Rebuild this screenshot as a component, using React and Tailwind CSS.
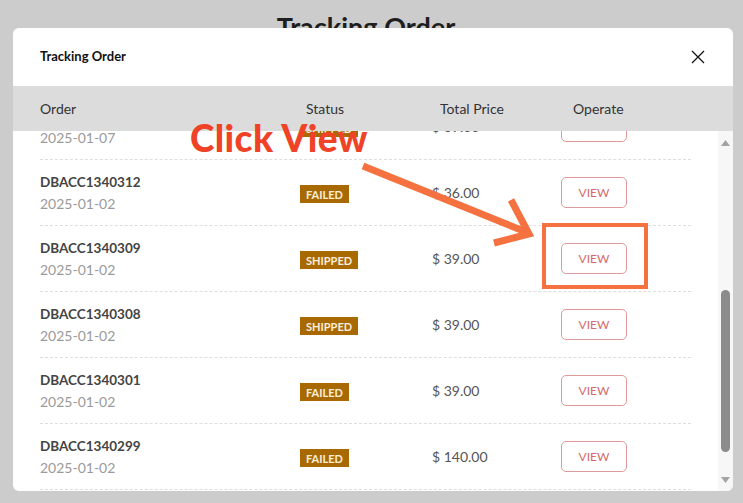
import React from "react";

const rows = [
  { id: "DBACC1340320", date: "2025-01-07", status: "SHIPPED", price: "$ 39.00" },
  { id: "DBACC1340312", date: "2025-01-02", status: "FAILED", price: "$ 36.00" },
  { id: "DBACC1340309", date: "2025-01-02", status: "SHIPPED", price: "$ 39.00" },
  { id: "DBACC1340308", date: "2025-01-02", status: "SHIPPED", price: "$ 39.00" },
  { id: "DBACC1340301", date: "2025-01-02", status: "FAILED", price: "$ 39.00" },
  { id: "DBACC1340299", date: "2025-01-02", status: "FAILED", price: "$ 140.00" },
  { id: "DBACC1340290", date: "2025-01-02", status: "FAILED", price: "$ 39.00" },
];

function Row({ r }) {
  return (
    <div className="flex items-center h-[66px] ml-[27px] w-[651px] border-b border-dashed border-[#dedede] shrink-0">
      <div className="w-[260px] flex flex-col">
        <span className="text-[13.5px] leading-[21px] font-bold text-[#444]">{r.id}</span>
        <span className="text-[14px] leading-[21px] text-[#9a9a9a]">{r.date}</span>
      </div>
      <div className="w-[132px]">
        <span className="inline-flex items-center h-[18px] px-[6px] bg-[#a86a00] text-[#fbeedd] text-[11px] font-bold leading-none">
          {r.status}
        </span>
      </div>
      <div className="w-[129px] text-[14px] text-[#555]">{r.price}</div>
      <div>
        <button className="w-[66px] h-[31px] border border-[#de9a9a] rounded-[5px] text-[12px] text-[#d66a6a] bg-white">
          VIEW
        </button>
      </div>
    </div>
  );
}

export default function App() {
  return (
    <div
      className="relative w-[743px] h-[503px] bg-[#cccccc] overflow-hidden"
      style={{ fontFamily: "Lato, 'Noto Sans', sans-serif" }}
    >
      <div className="flex justify-center pt-[13px] pr-[11px]">
        <h1 className="text-[27px] font-bold text-[#1e1e1e] leading-none">Tracking Order</h1>
      </div>

      {/* Modal */}
      <div className="absolute left-[13px] top-[28px] w-[720px] h-[463px] bg-white rounded-[6px] overflow-hidden flex flex-col">
        <div className="h-[58px] flex items-center justify-between pl-[27px] pr-[28px] shrink-0">
          <span className="text-[13px] font-bold text-[#111]">Tracking Order</span>
          <svg width="14" height="14" viewBox="0 0 14 14">
            <path d="M1 1 L13 13 M13 1 L1 13" stroke="#111" strokeWidth="1.3" fill="none" />
          </svg>
        </div>
        <div className="h-[45px] bg-[#dcdcdc] flex items-center pl-[27px] text-[14px] text-[#333] shrink-0">
          <span className="w-[266px]">Order</span>
          <span className="w-[134px]">Status</span>
          <span className="w-[133px]">Total Price</span>
          <span>Operate</span>
        </div>
        <div className="flex flex-1 min-h-0">
          <div className="flex-1 overflow-hidden">
            <div className="flex flex-col mt-[-37px]">
              {rows.map((r, i) => (
                <Row key={i} r={r} />
              ))}
            </div>
          </div>
          {/* scrollbar */}
          <div className="w-[15px] bg-[#f7f7f7] flex flex-col items-center">
            <svg width="9" height="6" viewBox="0 0 9 6" className="mt-[9px]">
              <path d="M0 6 L4.5 0 L9 6 Z" fill="#a3a3a3" />
            </svg>
            <div className="flex-1 w-full flex justify-center">
              <div className="w-[9px] h-[162px] mt-[144px] rounded-full bg-[#8c8c8c]" />
            </div>
            <svg width="9" height="6" viewBox="0 0 9 6" className="mb-[8px]">
              <path d="M0 0 L9 0 L4.5 6 Z" fill="#a3a3a3" />
            </svg>
          </div>
        </div>
      </div>

      {/* Annotation overlays */}
      <div className="absolute left-[190px] top-[119px] text-[37px] font-black text-[#ef4226] leading-none tracking-[0.4px]">
        Click View
      </div>
      <div className="absolute left-[542px] top-[223px] w-[106px] h-[66px] border-[4px] border-[#f5713f]" />
      <svg className="absolute left-0 top-0" width="743" height="503" viewBox="0 0 743 503">
        <path d="M363 166 L526 232" stroke="#f5713f" strokeWidth="7" fill="none" />
        <path d="M511 200 L529 234 L494 243" stroke="#f5713f" strokeWidth="7" fill="none" strokeLinejoin="miter" />
      </svg>
    </div>
  );
}
